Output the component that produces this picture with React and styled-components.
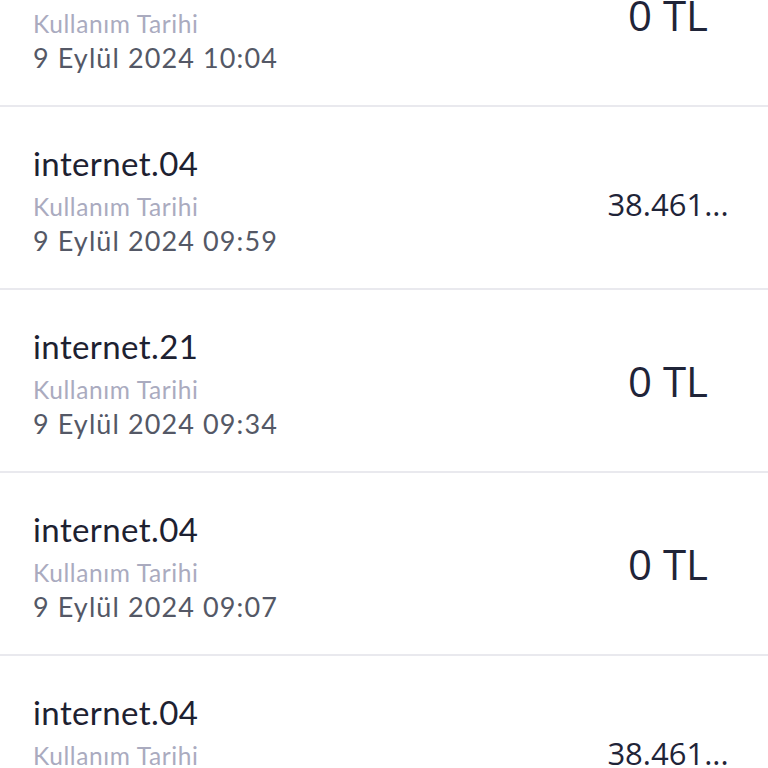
import styled, { createGlobalStyle } from 'styled-components';

const GlobalStyle = createGlobalStyle`
  html, body {
    margin: 0;
    padding: 0;
    background: #ffffff;
    overflow: hidden;
  }
`;

const List = styled.div`
  margin-top: -76px;
  background: #ffffff;
`;

const Row = styled.div`
  height: 181px;
  display: flex;
  align-items: center;
  justify-content: space-between;
  padding: 0 0 0 33px;
  border-bottom: 2px solid #e9e9ee;
`;

const Info = styled.div`
  display: flex;
  flex-direction: column;
  padding-top: 6px;
  font-family: Lato, "Noto Sans", sans-serif;
`;

const Title = styled.div`
  font-size: 33px;
  line-height: 40px;
  letter-spacing: 0.4px;
  color: #1d2131;
  margin-bottom: 7px;
`;

const Label = styled.div`
  font-size: 24.5px;
  line-height: 34px;
  letter-spacing: 0.6px;
  font-weight: 400;
  color: #aaabbf;
`;

const DateText = styled.div`
  font-size: 27px;
  line-height: 34px;
  letter-spacing: 1.1px;
  color: #545866;
`;

const Amount = styled.div`
  width: 200px;
  text-align: center;
  font-family: "Open Sans", "Noto Sans", sans-serif;
  font-size: ${(p) => (p.small ? '31px' : '42px')};
  color: #1f2438;
  padding-top: ${(p) => (p.small ? '12px' : '0')};
`;

const items = [
  { title: 'internet.04', date: '9 Eylül 2024 10:04', amount: '0 TL' },
  { title: 'internet.04', date: '9 Eylül 2024 09:59', amount: '38.461...', small: true },
  { title: 'internet.21', date: '9 Eylül 2024 09:34', amount: '0 TL' },
  { title: 'internet.04', date: '9 Eylül 2024 09:07', amount: '0 TL' },
  { title: 'internet.04', date: '9 Eylül 2024 08:51', amount: '38.461...', small: true },
];

export default function App() {
  return (
    <>
      <GlobalStyle />
      <List>
        {items.map((item, i) => (
          <Row key={`row-${i}`}>
            <Info>
              <Title>{item.title}</Title>
              <Label>Kullanım Tarihi</Label>
              <DateText>{item.date}</DateText>
            </Info>
            <Amount small={item.small}>{item.amount}</Amount>
          </Row>
        ))}
      </List>
    </>
  );
}
